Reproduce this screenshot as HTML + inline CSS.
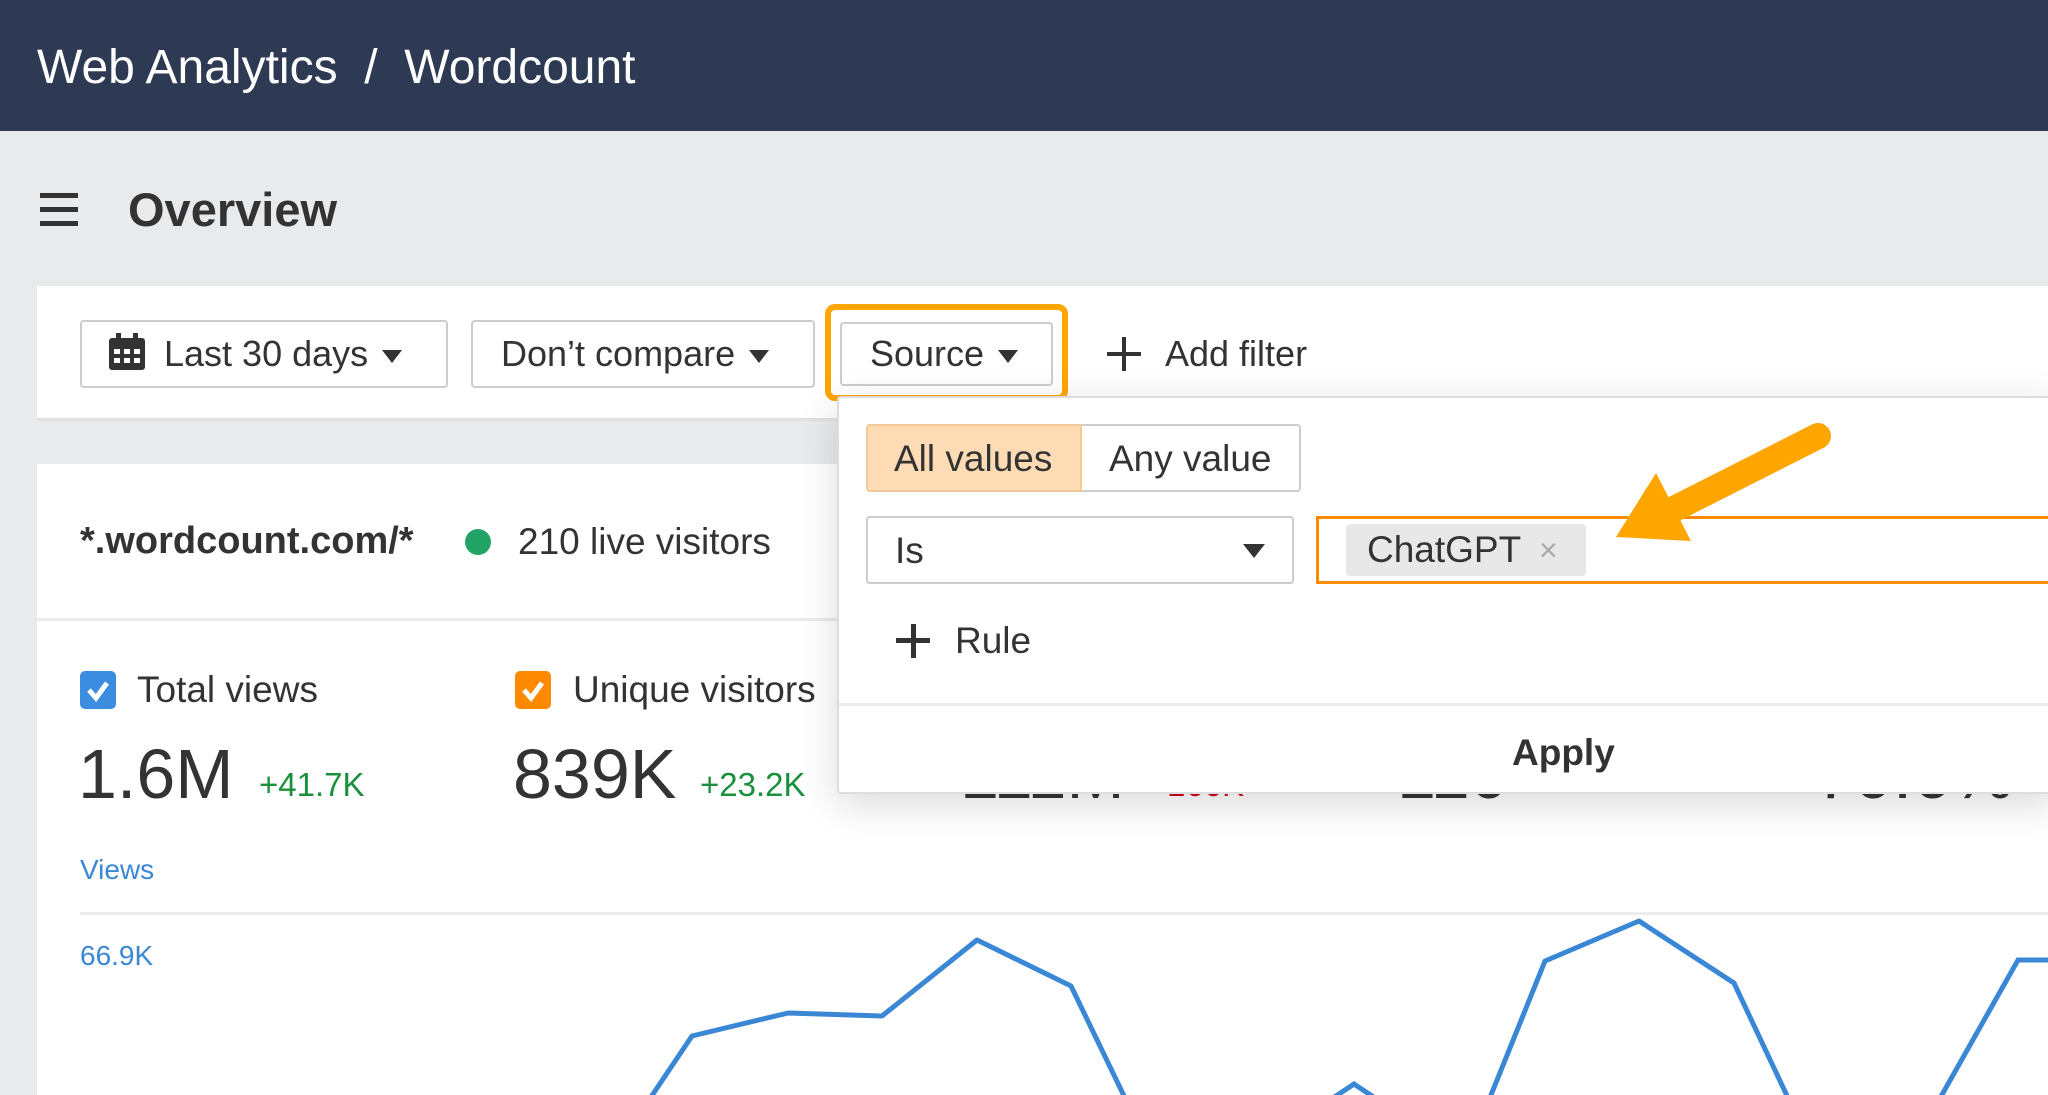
<!DOCTYPE html>
<html><head><meta charset="utf-8"><style>
*{margin:0;padding:0;box-sizing:border-box}
body{width:2048px;height:1095px;overflow:hidden;background:#e9eaec;font-family:"Liberation Sans",Arial,sans-serif;color:#333;position:relative}
.a{position:absolute;white-space:nowrap}
.btn{position:absolute;top:320px;height:68px;border:2px solid #ccc;border-radius:4px;background:#fff;font-size:36px;line-height:64px;color:#333}
.tri{display:inline-block;width:0;height:0;border-left:10px solid transparent;border-right:10px solid transparent;border-top:13px solid #333;vertical-align:middle;margin-left:14px}
</style></head><body>
<div class="a" style="left:0;top:0;width:2048px;height:131px;background:#2e3a53"></div>
<div class="a" style="left:37px;top:40px;font-size:48px;color:#fff;line-height:56px">Web Analytics &nbsp;/&nbsp; Wordcount</div>
<div class="a" style="left:40px;top:193px;width:38px;height:5px;background:#333"></div>
<div class="a" style="left:40px;top:207px;width:38px;height:5px;background:#333"></div>
<div class="a" style="left:40px;top:221px;width:38px;height:5px;background:#333"></div>
<div class="a" style="left:128px;top:184px;font-size:47px;font-weight:bold;line-height:52px">Overview</div>
<div class="a" style="left:37px;top:286px;width:2011px;height:135px;background:#fff;border-bottom:3px solid #e0e0e0"></div>
<div class="btn" style="left:80px;width:368px;padding-left:26px">
<svg width="38" height="38" viewBox="0 0 38 38" style="vertical-align:-5px;margin-right:18px"><rect x="1" y="5" width="36" height="32" rx="3" fill="#333"/><rect x="8" y="0" width="5" height="9" fill="#333"/><rect x="25" y="0" width="5" height="9" fill="#333"/><g fill="#fff"><rect x="6" y="16" width="6" height="5"/><rect x="16" y="16" width="6" height="5"/><rect x="26" y="16" width="6" height="5"/><rect x="6" y="25" width="6" height="5"/><rect x="16" y="25" width="6" height="5"/><rect x="26" y="25" width="6" height="5"/></g></svg>Last 30 days<span class="tri"></span></div>
<div class="btn" style="left:471px;width:344px;padding-left:28px">Don’t compare<span class="tri"></span></div>
<div class="a" style="left:825px;top:304px;width:243px;height:97px;border:6px solid #ffa500;border-radius:10px"></div>
<div class="btn" style="left:840px;width:213px;padding-left:28px;top:322px;height:64px;line-height:60px">Source<span class="tri"></span></div>
<div class="a" style="left:1107px;top:352px;width:34px;height:4px;background:#333"></div>
<div class="a" style="left:1122px;top:337px;width:4px;height:34px;background:#333"></div>
<div class="a" style="left:1165px;top:332px;font-size:36px;line-height:44px">Add filter</div>
<div class="a" style="left:37px;top:464px;width:2011px;height:631px;background:#fff"></div>
<div class="a" style="left:37px;top:618px;width:2011px;height:3px;background:#ececec"></div>
<div class="a" style="left:80px;top:519px;font-size:38px;font-weight:bold;line-height:44px">*.wordcount.com/*</div>
<div class="a" style="left:465px;top:529px;width:26px;height:26px;border-radius:50%;background:#21a366"></div>
<div class="a" style="left:518px;top:520px;font-size:37px;line-height:44px">210 live visitors</div>
<div class="a" style="left:80px;top:671px;width:36px;height:38px;border-radius:5px;background:#3b8de0"></div>
<svg class="a" style="left:80px;top:671px" width="36" height="38"><path d="M9 19l7 8 11-15" stroke="#fff" stroke-width="5" fill="none"/></svg>
<div class="a" style="left:137px;top:668px;font-size:37px;line-height:44px">Total views</div>
<div class="a" style="left:515px;top:671px;width:36px;height:38px;border-radius:5px;background:#ff8a00"></div>
<svg class="a" style="left:515px;top:671px" width="36" height="38"><path d="M9 19l7 8 11-15" stroke="#fff" stroke-width="5" fill="none"/></svg>
<div class="a" style="left:573px;top:668px;font-size:37px;line-height:44px">Unique visitors</div>
<div class="a" style="left:78px;top:735px;font-size:70px;line-height:78px">1.6M</div>
<div class="a" style="left:259px;top:765px;font-size:33px;line-height:40px;color:#1a8f3c">+41.7K</div>
<div class="a" style="left:513px;top:735px;font-size:70px;line-height:78px">839K</div>
<div class="a" style="left:700px;top:765px;font-size:33px;line-height:40px;color:#1a8f3c">+23.2K</div>
<div class="a" style="left:960px;top:735px;font-size:70px;line-height:78px">111M</div>
<div class="a" style="left:1156px;top:765px;font-size:33px;line-height:40px;color:#d0021b">-166K</div>
<div class="a" style="left:1397px;top:735px;font-size:70px;line-height:78px">110</div>
<div class="a" style="left:1815px;top:735px;font-size:70px;line-height:78px">70.6%</div>
<div class="a" style="left:80px;top:852px;font-size:28px;line-height:36px;color:#3a87d6">Views</div>
<div class="a" style="left:80px;top:912px;width:1968px;height:3px;background:#ececec"></div>
<div class="a" style="left:80px;top:938px;font-size:28px;line-height:36px;color:#3a87d6">66.9K</div>
<svg class="a" style="left:0;top:0" width="2048" height="1095"><polyline points="649,1100 692,1036 788,1013 882,1016 977,940 1071,986 1126,1100" fill="none" stroke="#3a87d6" stroke-width="5" stroke-linejoin="round"/><polyline points="1330,1100 1354,1084 1378,1100" fill="none" stroke="#3a87d6" stroke-width="5"/><polyline points="1489,1100 1545,961 1639,921 1734,983 1789,1100" fill="none" stroke="#3a87d6" stroke-width="5" stroke-linejoin="round"/><polyline points="1939,1100 2018,960 2048,960" fill="none" stroke="#3a87d6" stroke-width="5"/></svg>
<div class="a" style="left:837px;top:396px;width:1220px;height:398px;background:#fff;border:2px solid #ddd;border-radius:4px;box-shadow:0 10px 40px rgba(0,0,0,.15)"></div>
<div class="a" style="left:866px;top:424px;width:435px;height:68px;border:2px solid #ccc;border-radius:4px;background:#fff"></div>
<div class="a" style="left:866px;top:424px;width:216px;height:68px;border:2px solid #f3c99a;border-radius:4px 0 0 4px;background:#fddcb5"></div>
<div class="a" style="left:894px;top:437px;font-size:37px;line-height:44px">All values</div>
<div class="a" style="left:1109px;top:437px;font-size:37px;line-height:44px">Any value</div>
<div class="a" style="left:866px;top:516px;width:428px;height:68px;border:2px solid #ccc;border-radius:4px;background:#fff"></div>
<div class="a" style="left:895px;top:529px;font-size:37px;line-height:44px">Is</div>
<div class="a" style="left:1243px;top:544px;border-left:11px solid transparent;border-right:11px solid transparent;border-top:14px solid #333"></div>
<div class="a" style="left:1316px;top:516px;width:740px;height:68px;border:3px solid #ff8c00"></div>
<div class="a" style="left:1346px;top:524px;width:240px;height:52px;background:#e8e8e8;border-radius:4px"></div>
<div class="a" style="left:1367px;top:528px;font-size:37px;line-height:44px">ChatGPT</div>
<div class="a" style="left:1539px;top:528px;font-size:32px;line-height:44px;color:#aaa">×</div>
<div class="a" style="left:896px;top:638px;width:34px;height:5px;background:#333"></div>
<div class="a" style="left:911px;top:624px;width:5px;height:34px;background:#333"></div>
<div class="a" style="left:955px;top:619px;font-size:37px;line-height:44px">Rule</div>
<div class="a" style="left:839px;top:703px;width:1209px;height:3px;background:#ececec"></div>
<div class="a" style="left:1512px;top:731px;font-size:37px;font-weight:bold;line-height:44px">Apply</div>
<svg class="a" style="left:0;top:0" width="2048" height="1095"><line x1="1818" y1="436" x2="1672" y2="510" stroke="#ffa500" stroke-width="26" stroke-linecap="round"/><polygon points="1616,537 1656,473 1691,541" fill="#ffa500"/></svg>
</body></html>
